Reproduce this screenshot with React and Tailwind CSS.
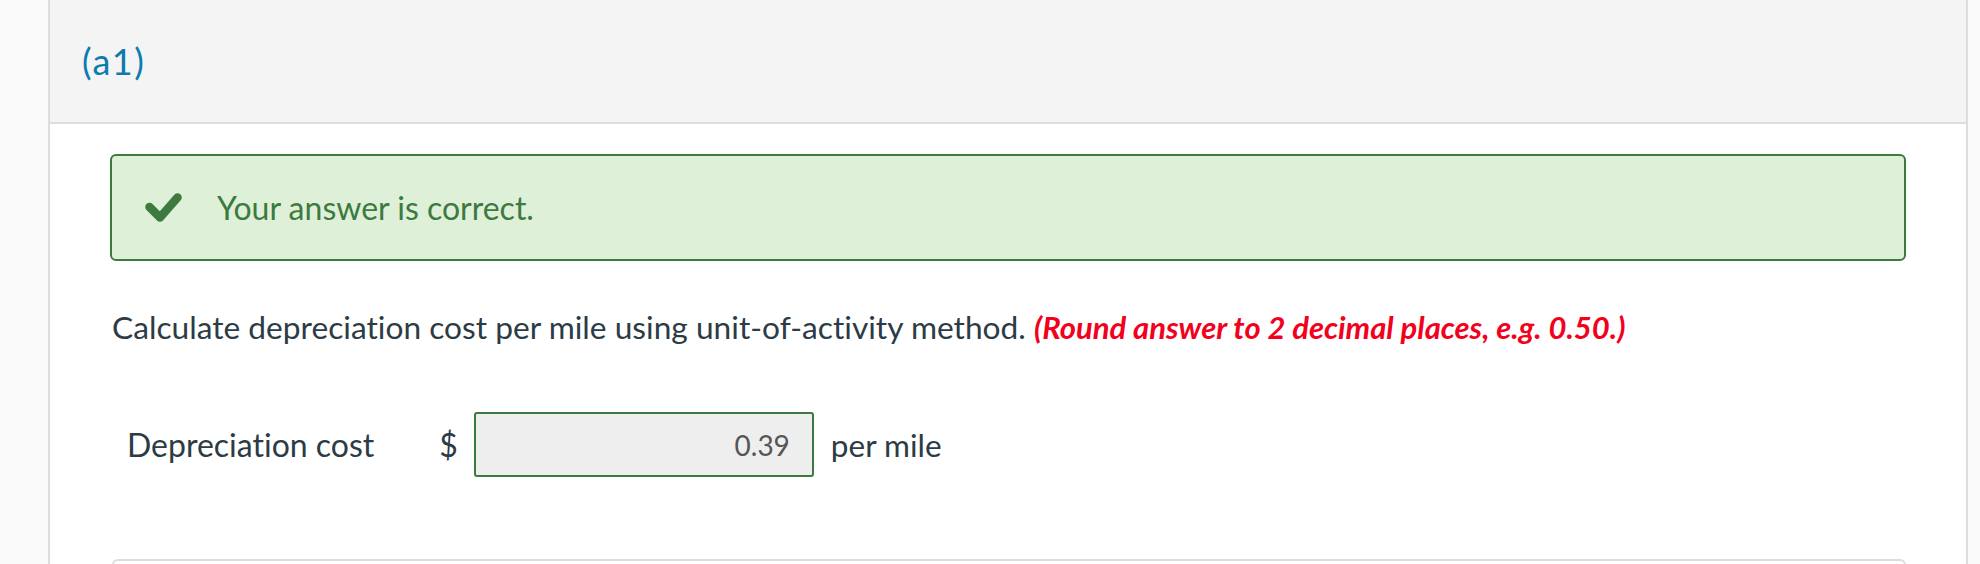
import React from "react";

function CheckMark() {
  return (
    <svg width="37" height="29" viewBox="0 0 37 29" className="shrink-0">
      <polyline
        points="4.5,14 15,24.5 32.5,4.5"
        fill="none"
        stroke="#3c7a3f"
        strokeWidth="8.5"
        strokeLinecap="round"
        strokeLinejoin="round"
      />
    </svg>
  );
}

export default function App() {
  return (
    <div className="flex w-full h-[564px] overflow-hidden bg-[#f9f9f9] font-['Lato','Liberation_Sans',sans-serif] text-[#2d3b45] [font-variant-ligatures:none]">
      <div className="w-[48px] shrink-0" />
      <div className="flex-1 flex flex-col bg-white border-l-2 border-r-2 border-[#dddddd] mr-[12px]">
        <div className="h-[124px] shrink-0 flex items-center pl-[32px] bg-[#f4f4f4] border-b-2 border-[#dddddd]">
          <span className="text-[36px] leading-[40px] tracking-[1.5px] text-[#0b7bb0]">(a1)</span>
        </div>

        <div className="flex flex-col px-[60px] pt-[30px]">
          {/* feedback */}
          <div className="h-[107px] flex items-center gap-[35px] pl-[33px] bg-[#dff0d8] border-2 border-[#3c7a3f] rounded-[6px]">
            <CheckMark />
            <span className="text-[32px] leading-[38px] text-[#3c7a3f]">Your answer is correct.</span>
          </div>

          {/* question */}
          <p className="mt-[47px] ml-[2px] text-[31.7px] leading-[38px]">
            Calculate depreciation cost per mile using unit-of-activity method.{" "}
            <span className="italic font-bold text-[31px] text-[#f2001c]">
              (Round answer to 2 decimal places, e.g. 0.50.)
            </span>
          </p>

          {/* answer row */}
          <div className="mt-[66px] ml-[17px] flex items-center">
            <span className="text-[32px] leading-[38px]">Depreciation cost</span>
            <span className="ml-[65px] text-[32px] leading-[38px]">$</span>
            <div className="ml-[16px] w-[340px] h-[65px] flex items-center justify-end pr-[22px] bg-[#eeeeee] border-2 border-[#3c7a3f] rounded-[3px]">
              <span className="text-[28px] leading-[34px] text-[#555555]">0.39</span>
            </div>
            <span className="ml-[17px] text-[31.5px] leading-[38px]">per mile</span>
          </div>

          {/* next panel */}
          <div className="mt-[82px] ml-[2px] h-[60px] border-2 border-[#dddddd] rounded-[6px]" />
        </div>
      </div>
    </div>
  );
}
